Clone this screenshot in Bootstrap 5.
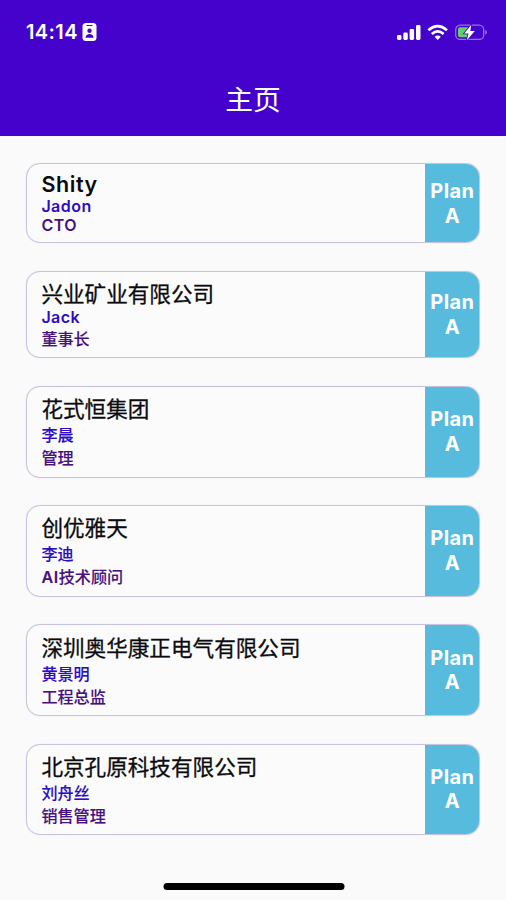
<!DOCTYPE html>
<html lang="zh-CN">
<head>
<meta charset="utf-8">
<meta name="viewport" content="width=device-width, initial-scale=1">
<title>主页</title>
<link href="https://cdn.jsdelivr.net/npm/bootstrap@5.3.0/dist/css/bootstrap.min.css" rel="stylesheet">
<style>
body{font-family:Inter,"Noto Sans CJK SC",sans-serif;background:#fafafa;height:900px;overflow:hidden}
.top-area{background:#4402cc;height:136px}
.status-row{height:63px;padding:0 17px 0 26px}
.clock{font-size:20px;font-weight:600;line-height:24px;letter-spacing:.4px}
.page-title{font-size:27.8px;line-height:40px;font-weight:400;margin-top:17px}
.people{padding:27.4px 26px 0;gap:27.6px}
.person{border:1px solid #c8c4e0;border-radius:14px;overflow:hidden;background:#fbfbfc;box-shadow:0 0 1px #d5d1ea}
.details{padding:7.1px 14px 7.5px 14.4px}
.person:first-child .details{padding-top:7.9px;padding-bottom:7px}
.person:first-child .plan{padding-top:1px}
.company{font-size:21.6px;line-height:27px;padding-top:2px;color:#0b0b0d;font-weight:400;-webkit-text-stroke:.3px currentColor}
.contact,.position-name{font-size:16.1px;line-height:21px;padding-top:2px;font-weight:500;-webkit-text-stroke:.12px currentColor}
.contact{color:#2d0cc4}
.position-name{color:#47107f}
.latin{line-height:19px;padding-top:0;font-size:16px;font-weight:600;letter-spacing:.45px;-webkit-text-stroke:0}
.company.latin{font-size:21.5px;line-height:25px;letter-spacing:.6px}
.initials{font-weight:600;letter-spacing:.6px}
.plan{width:55.4px;margin:-1px -1px -1px 0;background:#57bbde;font-size:20px;font-weight:700;line-height:24.7px;letter-spacing:.4px}
.home-bar{width:181px;height:7px;background:#000;bottom:10px;margin-left:1px}
</style>
<script src="https://cdn.jsdelivr.net/npm/bootstrap@5.3.0/dist/js/bootstrap.bundle.min.js"></script>
</head>
<body class="position-relative">
<header class="top-area text-white">
  <div class="status-row d-flex align-items-center justify-content-between">
    <div class="d-flex align-items-center">
      <span class="clock">14:14</span>
      <svg class="ms-1" width="16" height="20" viewBox="0 0 16 20"><rect x="0.5" y="1" width="14" height="18" rx="3.5" fill="#fff"/><path d="M5 3.5h5" stroke="#4402cc" stroke-width="1.2" stroke-linecap="round"/><circle cx="7.5" cy="8.8" r="2.2" fill="#4402cc"/><path d="M3.5 15.7c0-5 8-5 8 0z" fill="#4402cc"/></svg>
    </div>
    <svg width="92" height="20" viewBox="0 0 92 20">
      <g fill="#fff"><rect x="0" y="13" width="4.5" height="5" rx="1.4"/><rect x="6.3" y="10.5" width="4.5" height="7.5" rx="1.4"/><rect x="12.6" y="7" width="4.5" height="11" rx="1.4"/><rect x="19" y="3" width="4.5" height="15" rx="1.4"/></g>
      <g fill="none" stroke="#fff" stroke-width="2.7"><path d="M31.4 8.3q9.2-8.2 18.6 0"/><path d="M34.8 12q5.9-5.1 11.8 0"/></g><path d="M37.6 14.8q3.1-2.5 6.2 0l-3.1 3.2z" fill="#fff"/>
      <rect x="58.7" y="3.2" width="28" height="14.2" rx="4.5" fill="none" stroke="#9474e3" stroke-width="1.3"/><path d="M88.2 7.7q3.6 2.5 0 5z" fill="#9474e3"/><path d="M63 5.2h8.5v10H63q-2 0-2-2v-6q0-2 2-2z" fill="#65ce6b"/>
      <path d="M74.3 2.8l-7.1 8.7h4.3l-1.7 6.7 8-9.1h-4.5z" fill="#fff" stroke="#4402cc" stroke-width="1.6" paint-order="stroke"/>
    </svg>
  </div>
  <h1 class="page-title mb-0 text-center">主页</h1>
</header>
<main class="people d-flex flex-column">
  <article class="person d-flex"><div class="details flex-grow-1"><div class="company latin">Shity</div><div class="contact latin">Jadon</div><div class="position-name latin">CTO</div></div><div class="plan d-flex align-items-center text-center text-white"><span class="w-100">Plan<br>A</span></div></article>
  <article class="person d-flex"><div class="details flex-grow-1"><div class="company">兴业矿业有限公司</div><div class="contact latin">Jack</div><div class="position-name">董事长</div></div><div class="plan d-flex align-items-center text-center text-white"><span class="w-100">Plan<br>A</span></div></article>
  <article class="person d-flex"><div class="details flex-grow-1"><div class="company">花式恒集团</div><div class="contact">李晨</div><div class="position-name">管理</div></div><div class="plan d-flex align-items-center text-center text-white"><span class="w-100">Plan<br>A</span></div></article>
  <article class="person d-flex"><div class="details flex-grow-1"><div class="company">创优雅天</div><div class="contact">李迪</div><div class="position-name"><span class="initials">AI</span>技术顾问</div></div><div class="plan d-flex align-items-center text-center text-white"><span class="w-100">Plan<br>A</span></div></article>
  <article class="person d-flex"><div class="details flex-grow-1"><div class="company">深圳奥华康正电气有限公司</div><div class="contact">黄景明</div><div class="position-name">工程总监</div></div><div class="plan d-flex align-items-center text-center text-white"><span class="w-100">Plan<br>A</span></div></article>
  <article class="person d-flex"><div class="details flex-grow-1"><div class="company">北京孔原科技有限公司</div><div class="contact">刘舟丝</div><div class="position-name">销售管理</div></div><div class="plan d-flex align-items-center text-center text-white"><span class="w-100">Plan<br>A</span></div></article>
</main>
<div class="home-bar position-absolute start-50 translate-middle-x rounded-pill"></div>
</body>
</html>
